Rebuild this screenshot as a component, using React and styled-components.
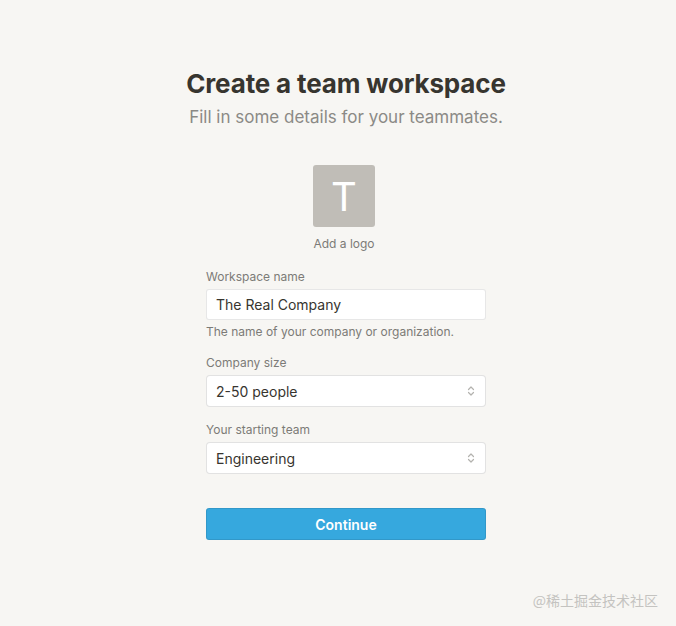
import React from 'react'
import styled, { createGlobalStyle } from 'styled-components'

const GlobalStyle = createGlobalStyle`
  html, body {
    margin: 0;
    padding: 0;
    background: #f7f6f3;
    font-family: Inter, "Noto Sans", "Liberation Sans", sans-serif;
    color: #37352f;
  }
`

const Page = styled.div`
  position: relative;
  width: 676px;
  height: 626px;
  box-sizing: border-box;
  padding: 67px 0 0 16px;
  display: flex;
  flex-direction: column;
  align-items: center;
`

const Title = styled.h1`
  margin: 0;
  font-size: 26px;
  line-height: 34px;
  font-weight: 700;
  letter-spacing: -0.15px;
  color: #37352f;
`

const Subtitle = styled.p`
  margin: 4px 0 0;
  font-size: 17px;
  line-height: 24px;
  color: #8b8a86;
`

const LogoPicker = styled.div`
  margin-top: 36px;
  margin-left: -4px;
  display: flex;
  flex-direction: column;
  align-items: center;
  cursor: pointer;
`

const LogoBox = styled.div`
  width: 62px;
  height: 62px;
  border-radius: 3px;
  background: #c0bdb7;
  color: #fff;
  display: flex;
  align-items: center;
  justify-content: center;
  font-size: 40px;
  font-weight: 400;
`

const LogoHint = styled.div`
  margin-top: 9px;
  font-size: 12px;
  line-height: 16px;
  color: #7c7b77;
`

const Form = styled.form`
  width: 280px;
  margin-top: 17px;
  display: flex;
  flex-direction: column;
`

const Field = styled.div`
  display: flex;
  flex-direction: column;
  margin-bottom: ${p => p.gap || 14}px;
`

const Label = styled.label`
  font-size: 12px;
  line-height: 16px;
  color: #7c7b77;
  margin-bottom: 4px;
`

const Input = styled.input`
  box-sizing: border-box;
  height: 31px;
  padding: 0 9px;
  border: 1px solid rgba(15, 15, 15, 0.1);
  border-radius: 3px;
  background: #fff;
  font-family: inherit;
  font-size: 14px;
  color: #37352f;
  outline: none;
`

const Help = styled.div`
  margin-top: 4px;
  font-size: 12px;
  line-height: 16px;
  color: #7c7b77;
`

const SelectBox = styled.div`
  box-sizing: border-box;
  height: 32px;
  padding: 0 9px;
  border: 1px solid rgba(15, 15, 15, 0.12);
  border-radius: 4px;
  background: #fff;
  display: flex;
  align-items: center;
  justify-content: space-between;
  font-size: 14px;
  color: #37352f;
`

const Button = styled.button`
  margin-top: 20px;
  height: 32px;
  border: 1px solid rgba(15, 15, 15, 0.1);
  border-radius: 3px;
  background: #36a8de;
  color: #fff;
  font-family: inherit;
  font-size: 14px;
  font-weight: 600;
  cursor: pointer;
`

const Watermark = styled.div`
  position: absolute;
  right: 18px;
  bottom: 16px;
  font-size: 14px;
  color: #c4c3c0;
  font-family: "Noto Sans CJK SC", sans-serif;
`

function Chevrons() {
  return (
    <svg width="10" height="14" viewBox="0 0 10 14" fill="none" stroke="#b3b2ae" strokeWidth="1.2" strokeLinecap="round" strokeLinejoin="round">
      <path d="M2.5 5.5 L5 3 L7.5 5.5" />
      <path d="M2.5 8.5 L5 11 L7.5 8.5" />
    </svg>
  )
}

function Select({ value }) {
  return (
    <SelectBox>
      <span>{value}</span>
      <Chevrons />
    </SelectBox>
  )
}

export default function App() {
  return (
    <Page>
      <GlobalStyle />
      <Title>Create a team workspace</Title>
      <Subtitle>Fill in some details for your teammates.</Subtitle>

      <LogoPicker>
        <LogoBox>T</LogoBox>
        <LogoHint>Add a logo</LogoHint>
      </LogoPicker>

      <Form onSubmit={e => e.preventDefault()}>
        <Field gap={15}>
          <Label>Workspace name</Label>
          <Input defaultValue="The Real Company" />
          <Help>The name of your company or organization.</Help>
        </Field>
        <Field gap={15}>
          <Label>Company size</Label>
          <Select value="2-50 people" />
        </Field>
        <Field gap={14}>
          <Label>Your starting team</Label>
          <Select value="Engineering" />
        </Field>
        <Button type="submit">Continue</Button>
      </Form>

      <Watermark>@稀土掘金技术社区</Watermark>
    </Page>
  )
}
